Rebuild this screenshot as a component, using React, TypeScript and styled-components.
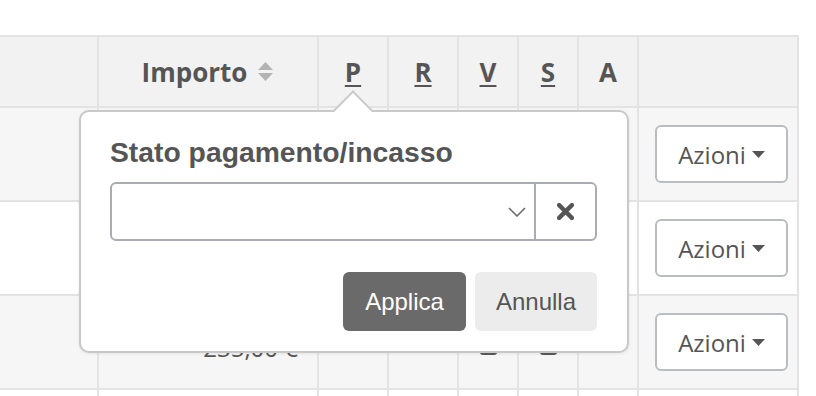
import React from 'react';
import styled, { createGlobalStyle } from 'styled-components';

const GlobalStyle = createGlobalStyle`
  body {
    margin: 0;
    background: #ffffff;
    font-family: "Open Sans", "Liberation Sans", sans-serif;
  }
`;

const Page = styled.div`
  position: relative;
  width: 816px;
  height: 396px;
  overflow: hidden;
  padding-top: 35px;
  box-sizing: border-box;
`;

const Table = styled.div`
  display: grid;
  grid-template-columns: 99px 220px 70px 70px 60px 60px 60px 160px;
  grid-auto-rows: 94px;
  grid-template-rows: 71px;
  width: 799px;
  border-top: 2px solid #e3e3e5;
`;

const Cell = styled.div<{ $bg: string; $align?: string }>`
  box-sizing: border-box;
  background: ${p => p.$bg};
  border-right: 2px solid #e3e3e5;
  border-bottom: 2px solid #e3e3e5;
  display: flex;
  align-items: center;
  justify-content: ${p => p.$align || 'center'};
  color: #555555;
`;

const HeadLabel = styled.span<{ $underline?: boolean }>`
  font-weight: 700;
  font-size: 26px;
  color: #555555;
  text-decoration: ${p => (p.$underline ? 'underline' : 'none')};
  text-decoration-thickness: 2px;
  text-underline-offset: 3px;
  display: flex;
  align-items: center;
  gap: 10px;
`;

const Amount = styled.span`
  font-size: 24px;
  padding-right: 19px;
  padding-top: 10px;
`;

const StatusIcon = styled.span`
  width: 17px;
  height: 22px;
  border-radius: 3px;
  background: #5a5a5a;
  margin-top: 4px;
`;

const ActionButton = styled.button`
  box-sizing: border-box;
  width: 133px;
  height: 58px;
  margin-left: 16px;
  border: 2px solid #b9bdc3;
  border-radius: 6px;
  background: #ffffff;
  color: #555555;
  font-family: "Open Sans", sans-serif;
  font-size: 24px;
  display: flex;
  align-items: center;
  justify-content: center;
  gap: 6px;
  padding: 0;
`;

const ActionCell = styled(Cell)`
  justify-content: flex-start;
`;

const Popover = styled.div`
  position: absolute;
  left: 79px;
  top: 110px;
  width: 550px;
  height: 243px;
  box-sizing: border-box;
  background: #ffffff;
  border: 2px solid #c9c9c9;
  border-radius: 10px;
  box-shadow: 0 1px 3px rgba(0, 0, 0, 0.08);
  padding: 24px 30px 0 29px;
  font-family: "Liberation Sans", Arial, sans-serif;
`;

const Arrow = styled.div`
  position: absolute;
  left: 258px;
  top: -16px;
  width: 28px;
  height: 28px;
  box-sizing: border-box;
  background: #ffffff;
  border-top: 2px solid #c9c9c9;
  border-left: 2px solid #c9c9c9;
  transform: rotate(45deg);
`;

const Title = styled.div`
  position: relative;
  font-size: 28.3px;
  line-height: 32px;
  font-weight: 700;
  color: #555555;
`;

const SelectBox = styled.div`
  margin-top: 14px;
  height: 59px;
  box-sizing: border-box;
  border: 2px solid #a9adb3;
  border-radius: 6px;
  display: flex;
`;

const SelectField = styled.div`
  flex: 1;
  display: flex;
  align-items: center;
  justify-content: flex-end;
  padding-right: 8px;
`;

const ClearButton = styled.div`
  width: 59px;
  border-left: 2px solid #a9adb3;
  display: flex;
  align-items: center;
  justify-content: center;
`;

const Footer = styled.div`
  margin-top: 31px;
  display: flex;
  justify-content: flex-end;
  gap: 9px;
`;

const Button = styled.button<{ $primary?: boolean }>`
  height: 59px;
  width: ${p => (p.$primary ? '123px' : '122px')};
  border: none;
  border-radius: 6px;
  background: ${p => (p.$primary ? '#6a6a6a' : '#ececec')};
  color: ${p => (p.$primary ? '#ffffff' : '#555555')};
  font-family: "Liberation Sans", Arial, sans-serif;
  font-size: 24px;
  padding: 0;
`;

const SortIcon = () => (
  <svg width="17" height="21" viewBox="0 0 17 21">
    <path d="M8.5 1 L16 9 L1 9 Z" fill="#b3b3b3" />
    <path d="M8.5 20 L16 12 L1 12 Z" fill="#b3b3b3" />
  </svg>
);

const Caret = () => (
  <svg width="13" height="7" viewBox="0 0 13 7">
    <path d="M0 0 L13 0 L6.5 7 Z" fill="#555555" />
  </svg>
);

// only the third row peeks out below the popover; the fourth starts at the edge
const rows = [
  { bg: '#f6f6f6', amount: false, status: false, action: true },
  { bg: '#ffffff', amount: false, status: false, action: true },
  { bg: '#f6f6f6', amount: true, status: true, action: true },
  { bg: '#ffffff', amount: false, status: false, action: false },
];

const App: React.FC = () => {
  return (
    <Page>
      <GlobalStyle />
      <Table>
        <Cell $bg="#f2f2f3" />
        <Cell $bg="#f2f2f3">
          <HeadLabel>
            Importo <SortIcon />
          </HeadLabel>
        </Cell>
        <Cell $bg="#f2f2f3"><HeadLabel $underline>P</HeadLabel></Cell>
        <Cell $bg="#f2f2f3"><HeadLabel $underline>R</HeadLabel></Cell>
        <Cell $bg="#f2f2f3"><HeadLabel $underline>V</HeadLabel></Cell>
        <Cell $bg="#f2f2f3"><HeadLabel $underline>S</HeadLabel></Cell>
        <Cell $bg="#f2f2f3"><HeadLabel>A</HeadLabel></Cell>
        <Cell $bg="#f2f2f3" />

        {rows.map((row, i) => (
          <React.Fragment key={i}>
            <Cell $bg={row.bg} />
            <Cell $bg={row.bg} $align="flex-end">
              {row.amount && <Amount>235,00 €</Amount>}
            </Cell>
            <Cell $bg={row.bg} />
            <Cell $bg={row.bg} />
            <Cell $bg={row.bg}>{row.status && <StatusIcon />}</Cell>
            <Cell $bg={row.bg}>{row.status && <StatusIcon />}</Cell>
            <Cell $bg={row.bg} />
            <ActionCell $bg={row.bg}>
              {row.action && (
                <ActionButton>
                  Azioni <Caret />
                </ActionButton>
              )}
            </ActionCell>
          </React.Fragment>
        ))}
      </Table>

      <Popover>
        <Arrow />
        <Title>Stato pagamento/incasso</Title>
        <SelectBox>
          <SelectField>
            <svg width="18" height="10" viewBox="0 0 18 10">
              <path d="M1 1 L9 9 L17 1" fill="none" stroke="#666666" strokeWidth="1.5" />
            </svg>
          </SelectField>
          <ClearButton>
            <svg width="17" height="17" viewBox="0 0 16 16">
              <path d="M2 2 L14 14 M14 2 L2 14" stroke="#555555" strokeWidth="4" strokeLinecap="round" />
            </svg>
          </ClearButton>
        </SelectBox>
        <Footer>
          <Button $primary>Applica</Button>
          <Button>Annulla</Button>
        </Footer>
      </Popover>
    </Page>
  );
};

export default App;
